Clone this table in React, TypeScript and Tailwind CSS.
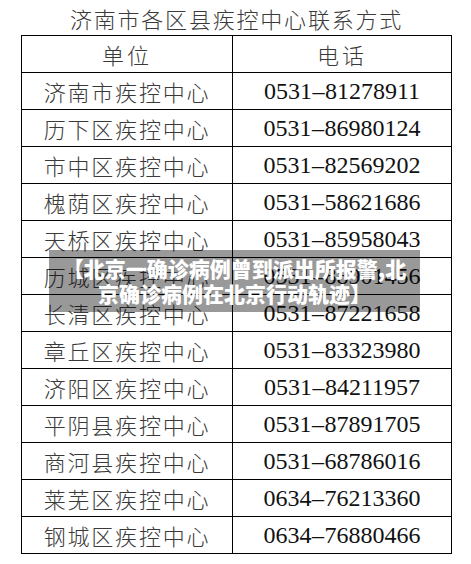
import React from "react";

const rows: [string, string][] = [
  ["济南市疾控中心", "0531-81278911"],
  ["历下区疾控中心", "0531-86980124"],
  ["市中区疾控中心", "0531-82569202"],
  ["槐荫区疾控中心", "0531-58621686"],
  ["天桥区疾控中心", "0531-85958043"],
  ["历城区疾控中心", "0531-88901456"],
  ["长清区疾控中心", "0531-87221658"],
  ["章丘区疾控中心", "0531-83323980"],
  ["济阳区疾控中心", "0531-84211957"],
  ["平阴县疾控中心", "0531-87891705"],
  ["商河县疾控中心", "0531-68786016"],
  ["莱芜区疾控中心", "0634-76213360"],
  ["钢城区疾控中心", "0634-76880466"],
];

const cjk = "font-['Noto_Sans_CJK_SC',sans-serif]";

const Phone = ({ value }: { value: string }) => {
  const [area, num] = value.split("-");
  return (
    <span>
      {area}
      <span className="inline-block w-[13px] text-center">–</span>
      {num}
    </span>
  );
};

const App = () => {
  return (
    <div className="relative w-[471px] h-[564px] bg-white overflow-hidden">
      <h1
        className={`${cjk} font-light text-[22px] leading-[34px] pt-[1px] tracking-[1.8px] text-[#3a3a3a] text-center pl-[2px]`}
      >
        济南市各区县疾控中心联系方式
      </h1>

      <table className="ml-[21px] w-[431px] border-collapse border border-black table-fixed">
        <colgroup>
          <col className="w-[211px]" />
          <col />
        </colgroup>
        <thead>
          <tr className="h-[37px]">
            <th className={`${cjk} font-light text-[22px] tracking-[3px] text-[#3a3a3a] border border-black p-0 text-center`}>
              单位
            </th>
            <th className={`${cjk} font-light text-[22px] tracking-[3px] text-[#3a3a3a] border border-black p-0 text-center`}>
              电话
            </th>
          </tr>
        </thead>
        <tbody>
          {rows.map(([name, phone]) => (
            <tr key={name} className="h-[37px]">
              <td className={`${cjk} font-light text-[22px] tracking-[1.8px] text-[#3a3a3a] border border-black p-0 text-center leading-none`}>
                {name}
              </td>
              <td className="font-['Liberation_Serif',serif] text-[24px] text-[#111] border border-black p-0 text-center leading-none">
                <Phone value={phone} />
              </td>
            </tr>
          ))}
        </tbody>
      </table>

      {/* overlay caption */}
      <div className="absolute left-[49px] top-[250px] w-[371px] h-[62px] bg-black/40 px-[10px] flex items-center justify-center">
        <p className={`${cjk} font-black text-[21px] leading-[25px] text-white text-center`}>
          【北京一确诊病例曾到派出所报警,北京确诊病例在北京行动轨迹】
        </p>
      </div>
    </div>
  );
};

export default App;
